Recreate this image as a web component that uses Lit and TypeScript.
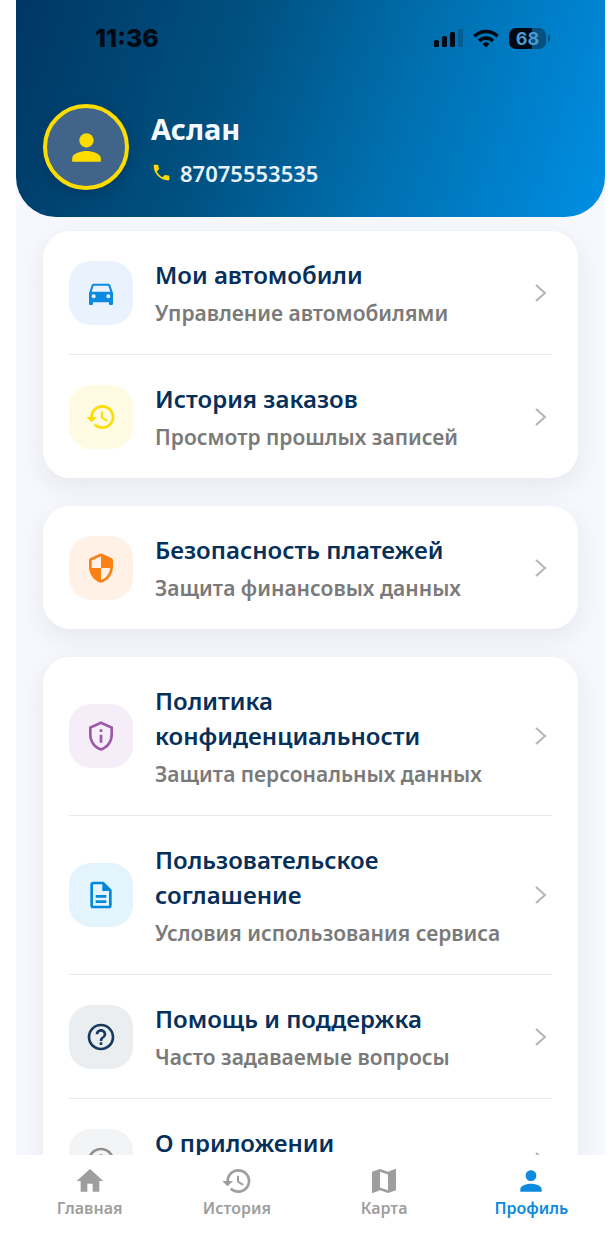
import { LitElement, html, css, svg } from "lit";
import { customElement, property } from "lit/decorators.js";

const ICONS: Record<string, string> = {
  person:
    "M12 12c2.21 0 4-1.79 4-4s-1.79-4-4-4-4 1.79-4 4 1.79 4 4 4zm0 2c-2.67 0-8 1.34-8 4v2h16v-2c0-2.66-5.33-4-8-4z",
  phone:
    "M6.62 10.79c1.44 2.83 3.76 5.14 6.59 6.59l2.2-2.2c.27-.27.67-.36 1.02-.24 1.12.37 2.33.57 3.57.57.55 0 1 .45 1 1V20c0 .55-.45 1-1 1-9.39 0-17-7.61-17-17 0-.55.45-1 1-1h3.5c.55 0 1 .45 1 1 0 1.25.2 2.45.57 3.57.11.35.03.74-.25 1.02l-2.2 2.2z",
  car: "M18.92 6.01C18.72 5.42 18.16 5 17.5 5h-11c-.66 0-1.21.42-1.42 1.01L3 12v8c0 .55.45 1 1 1h1c.55 0 1-.45 1-1v-1h12v1c0 .55.45 1 1 1h1c.55 0 1-.45 1-1v-8l-2.08-5.99zM6.5 16c-.83 0-1.5-.67-1.5-1.5S5.67 13 6.5 13s1.5.67 1.5 1.5S7.33 16 6.5 16zm11 0c-.83 0-1.5-.67-1.5-1.5s.67-1.5 1.5-1.5 1.5.67 1.5 1.5-.67 1.5-1.5 1.5zM5 11l1.5-4.5h11L19 11H5z",
  history:
    "M13 3c-4.97 0-9 4.03-9 9H1l3.89 3.89.07.14L9 12H6c0-3.87 3.13-7 7-7s7 3.13 7 7-3.13 7-7 7c-1.93 0-3.68-.79-4.94-2.06l-1.42 1.42C8.27 19.99 10.51 21 13 21c4.97 0 9-4.03 9-9s-4.03-9-9-9zm-1 5v5l4.28 2.54.72-1.21-3.5-2.08V8H12z",
  security:
    "M11.19 1.36l-7 3.11C3.47 4.79 3 5.51 3 6.3V11c0 5.55 3.84 10.74 9 12 5.16-1.26 9-6.45 9-12V6.3c0-.79-.47-1.51-1.19-1.83l-7-3.11c-.51-.23-1.11-.23-1.62 0zM12 11.99h7c-.53 4.12-3.28 7.79-7 8.94V12H5V6.3l7-3.11v8.8z",
  privacy:
    "M12 1L3 5v6c0 5.55 3.84 10.74 9 12 5.16-1.26 9-6.45 9-12V5l-9-4zm7 10c0 4.52-2.98 8.69-7 9.93-4.02-1.24-7-5.41-7-9.93V6.3l7-3.11 7 3.11V11zm-8 0h2v6h-2v-6zm0-4h2v2h-2V7z",
  document:
    "M8 16h8v2H8zm0-4h8v2H8zm6-10H6c-1.1 0-2 .9-2 2v16c0 1.1.89 2 1.99 2H18c1.1 0 2-.9 2-2V8l-6-6zm4 18H6V4h7v5h5v11z",
  help: "M11 18h2v-2h-2v2zm1-16C6.48 2 2 6.48 2 12s4.48 10 10 10 10-4.48 10-10S17.52 2 12 2zm0 18c-4.41 0-8-3.59-8-8s3.59-8 8-8 8 3.59 8 8-3.59 8-8 8zm0-14c-2.21 0-4 1.79-4 4h2c0-1.1.9-2 2-2s2 .9 2 2c0 2-3 1.75-3 5h2c0-2.25 3-2.5 3-5 0-2.21-1.79-4-4-4z",
  info: "M11 7h2v2h-2zm0 4h2v6h-2zm1-9C6.48 2 2 6.48 2 12s4.48 10 10 10 10-4.48 10-10S17.52 2 12 2zm0 18c-4.41 0-8-3.59-8-8s3.59-8 8-8 8 3.59 8 8-3.59 8-8 8z",
  home: "M10 20v-6h4v6h5v-8h3L12 3 2 12h3v8z",
  map: "M20.5 3l-.16.03L15 5.1 9 3 3.36 4.9c-.21.07-.36.25-.36.48V20.5c0 .28.22.5.5.5l.16-.03L9 18.9l6 2.1 5.64-1.9c.21-.07.36-.25.36-.48V3.5c0-.28-.22-.5-.5-.5zM15 19l-6-2.11V5l6 2.11V19z",
};

@customElement("ui-icon")
class UiIcon extends LitElement {
  @property() name = "";
  static styles = css`
    :host {
      display: block;
      width: 32px;
      height: 32px;
      flex: none;
    }
    .glyph {
      display: block;
      width: 100%;
      height: 100%;
      fill: currentColor;
    }
  `;
  render() {
    return html`<svg class="glyph" viewBox="0 0 24 24" aria-hidden="true">
      ${svg`<path fill-rule="evenodd" d=${ICONS[this.name] ?? ""}></path>`}
    </svg>`;
  }
}

@customElement("menu-row")
class MenuRow extends LitElement {
  @property() icon = "";
  @property() tone = "";
  @property() heading = "";
  @property() note = "";
  static styles = css`
    :host {
      display: block;
    }
    .row {
      display: flex;
      align-items: center;
      padding: 26px 0;
      color: inherit;
      text-decoration: none;
    }
    .tile {
      display: grid;
      place-items: center;
      flex: none;
      width: 64px;
      height: 64px;
      margin-right: 22px;
      border-radius: 22px;
    }
    .blue { background: #e9f2fd; color: #0b8ae0; }
    .yellow { background: #fffbe2; color: #fddc00; }
    .orange { background: #fff1e6; color: #fb8114; }
    .purple { background: #f5eef8; color: #9b59a6; }
    .cyan { background: #e4f4fd; color: #0288d8; }
    .navy { background: #ebeef0; color: #173a5e; }
    .gray { background: #f3f4f5; color: #8e8e8e; }
    .texts {
      display: grid;
      gap: 7px;
      flex: 1;
      min-width: 0;
    }
    .heading {
      font-size: 24px;
      font-weight: 600;
      line-height: 35px;
      color: #06305a;
    }
    .note {
      min-height: 29px;
      font-size: 21px;
      font-weight: 600;
      line-height: 29px;
      color: #7a7a7a;
    }
    .chevron {
      flex: none;
      width: 24px;
      height: 24px;
      fill: none;
      stroke: #b4b4b4;
      stroke-width: 2;
    }
  `;
  render() {
    return html`<a class="row" href="#">
      <span class="tile ${this.tone}"><ui-icon name=${this.icon}></ui-icon></span>
      <span class="texts">
        <span class="heading">${this.heading}</span>
        <span class="note">${this.note}</span>
      </span>
      <svg class="chevron" viewBox="0 0 24 24" aria-hidden="true">
        <path d="M8 4L17 12L8 20"></path>
      </svg>
    </a>`;
  }
}

const GROUPS = [
  [
    { icon: "car", tone: "blue", heading: "Мои автомобили", note: "Управление автомобилями" },
    { icon: "history", tone: "yellow", heading: "История заказов", note: "Просмотр прошлых записей" },
  ],
  [{ icon: "security", tone: "orange", heading: "Безопасность платежей", note: "Защита финансовых данных" }],
  [
    { icon: "privacy", tone: "purple", heading: "Политика конфиденциальности", note: "Защита персональных данных" },
    { icon: "document", tone: "cyan", heading: "Пользовательское соглашение", note: "Условия использования сервиса" },
    { icon: "help", tone: "navy", heading: "Помощь и поддержка", note: "Часто задаваемые вопросы" },
    { icon: "info", tone: "gray", heading: "О приложении", note: "" },
  ],
];

const TABS = [
  { icon: "home", label: "Главная" },
  { icon: "history", label: "История" },
  { icon: "map", label: "Карта" },
  { icon: "person", label: "Профиль", active: true },
];

@customElement("app-root")
class AppRoot extends LitElement {
  static styles = css`
    :host {
      display: flex;
      flex-direction: column;
      box-sizing: border-box;
      height: 100vh;
      padding: 0 11px 0 16px;
      background: #fff;
      font-family: "Noto Sans", "Open Sans", sans-serif;
    }
    .screen {
      display: flex;
      flex-direction: column;
      flex: 1;
      min-height: 0;
      overflow: hidden;
      background: #f7f8fd;
    }
    .hero {
      flex: none;
      padding: 0 27px 27px;
      border-radius: 0 0 40px 40px;
      background: linear-gradient(110deg, #003764 0%, #00507f 35%, #0071b2 66%, #008fe4 100%);
    }
    .status {
      display: flex;
      align-items: center;
      justify-content: space-between;
      height: 76px;
      padding: 0 28px 0 52px;
      color: #000a14;
    }
    .time {
      font-family: Inter, sans-serif;
      font-size: 25px;
      font-weight: 800;
      line-height: 32px;
    }
    .signals {
      display: flex;
      align-items: center;
      gap: 10px;
    }
    .bars { width: 29px; height: 18px; }
    .wifi { width: 26px; height: 20px; }
    .battery {
      display: flex;
      align-items: center;
      gap: 2px;
    }
    .cell {
      width: 37px;
      border-radius: 7px;
      background: linear-gradient(90deg, #000a14 62%, #07507f 62%);
      color: #4a9bd0;
      font-family: Inter, sans-serif;
      font-size: 18px;
      font-weight: 700;
      line-height: 21px;
      text-align: center;
    }
    .cap {
      width: 2px;
      height: 7px;
      border-radius: 0 2px 2px 0;
      background: #07507f;
    }
    .profile {
      display: flex;
      align-items: center;
      gap: 22px;
      margin-top: 28px;
    }
    .avatar {
      display: grid;
      place-items: center;
      box-sizing: border-box;
      width: 86px;
      height: 86px;
      border: 4px solid #fddc00;
      border-radius: 50%;
      background: #40648a;
      color: #fddc00;
      box-shadow: 0 3px 12px rgba(0, 30, 60, 0.3);
    }
    .avatar-icon { width: 43px; height: 43px; }
    .name {
      margin: 0;
      font-size: 29px;
      font-weight: 700;
      line-height: 44px;
      color: #f4f9ff;
    }
    .phone {
      display: flex;
      align-items: center;
      gap: 8px;
      font-size: 22px;
      font-weight: 600;
      line-height: 30px;
      margin-top: 7px;
      color: #e8f2fb;
    }
    .phone-icon { width: 21px; height: 21px; color: #fddc00; }
    .groups {
      display: grid;
      gap: 28px;
      padding: 14px 27px 0;
    }
    .card {
      padding: 0 26px;
      border-radius: 27px;
      background: #fff;
      box-shadow: 0 8px 26px rgba(30, 32, 40, 0.08);
    }
    .item + .item { border-top: 1px solid #e8e8ea; }
    .tabs {
      display: flex;
      flex: none;
      height: 96px;
      background: #fff;
    }
    .tab {
      display: flex;
      flex: 1;
      flex-direction: column;
      align-items: center;
      padding-top: 10px;
      color: #9e9e9e;
      font-size: 16px;
      font-weight: 600;
      line-height: 22px;
      text-decoration: none;
    }
    .active { color: #0b8ae0; }
  `;
  render() {
    return html`
      <div class="screen">
        <header class="hero">
          <div class="status">
            <span class="time">11:36</span>
            <span class="signals">
              <svg class="bars" viewBox="0 0 29 18" fill="currentColor" aria-hidden="true">
                <rect x="0" y="11" width="5" height="7" rx="1.500"></rect>
                <rect x="8" y="7" width="5" height="11" rx="1.500"></rect>
                <rect x="16" y="3" width="5" height="15" rx="1.500"></rect>
                <rect x="24" y="0" width="5" height="18" rx="1.500" opacity="0.2"></rect>
              </svg>
              <svg class="wifi" viewBox="0 0 26 20" fill="none" stroke="currentColor" stroke-width="3.600" aria-hidden="true">
                <path d="M1.500 8.200a16.500 16.500 0 0 1 23 0"></path>
                <path d="M6 13a10 10 0 0 1 14 0"></path>
                <path d="M13 19.500l-3.700-3.800a5.300 5.300 0 0 1 7.400 0z" fill="currentColor" stroke="none"></path>
              </svg>
              <span class="battery"><span class="cell">68</span><span class="cap"></span></span>
            </span>
          </div>
          <div class="profile">
            <span class="avatar"><ui-icon class="avatar-icon" name="person"></ui-icon></span>
            <div>
              <h1 class="name">Аслан</h1>
              <div class="phone"><ui-icon class="phone-icon" name="phone"></ui-icon>87075553535</div>
            </div>
          </div>
        </header>
        <main class="groups">
          ${GROUPS.map(
            (group) => html`<section class="card">
              ${group.map(
                (r) => html`<menu-row
                  class="item"
                  icon=${r.icon}
                  tone=${r.tone}
                  heading=${r.heading}
                  note=${r.note}
                ></menu-row>`
              )}
            </section>`
          )}
        </main>
      </div>
      <nav class="tabs">
        ${TABS.map(
          (t) => html`<a class="tab ${t.active ? "active" : ""}" href="#">
            <ui-icon name=${t.icon}></ui-icon>${t.label}
          </a>`
        )}
      </nav>
    `;
  }
}
